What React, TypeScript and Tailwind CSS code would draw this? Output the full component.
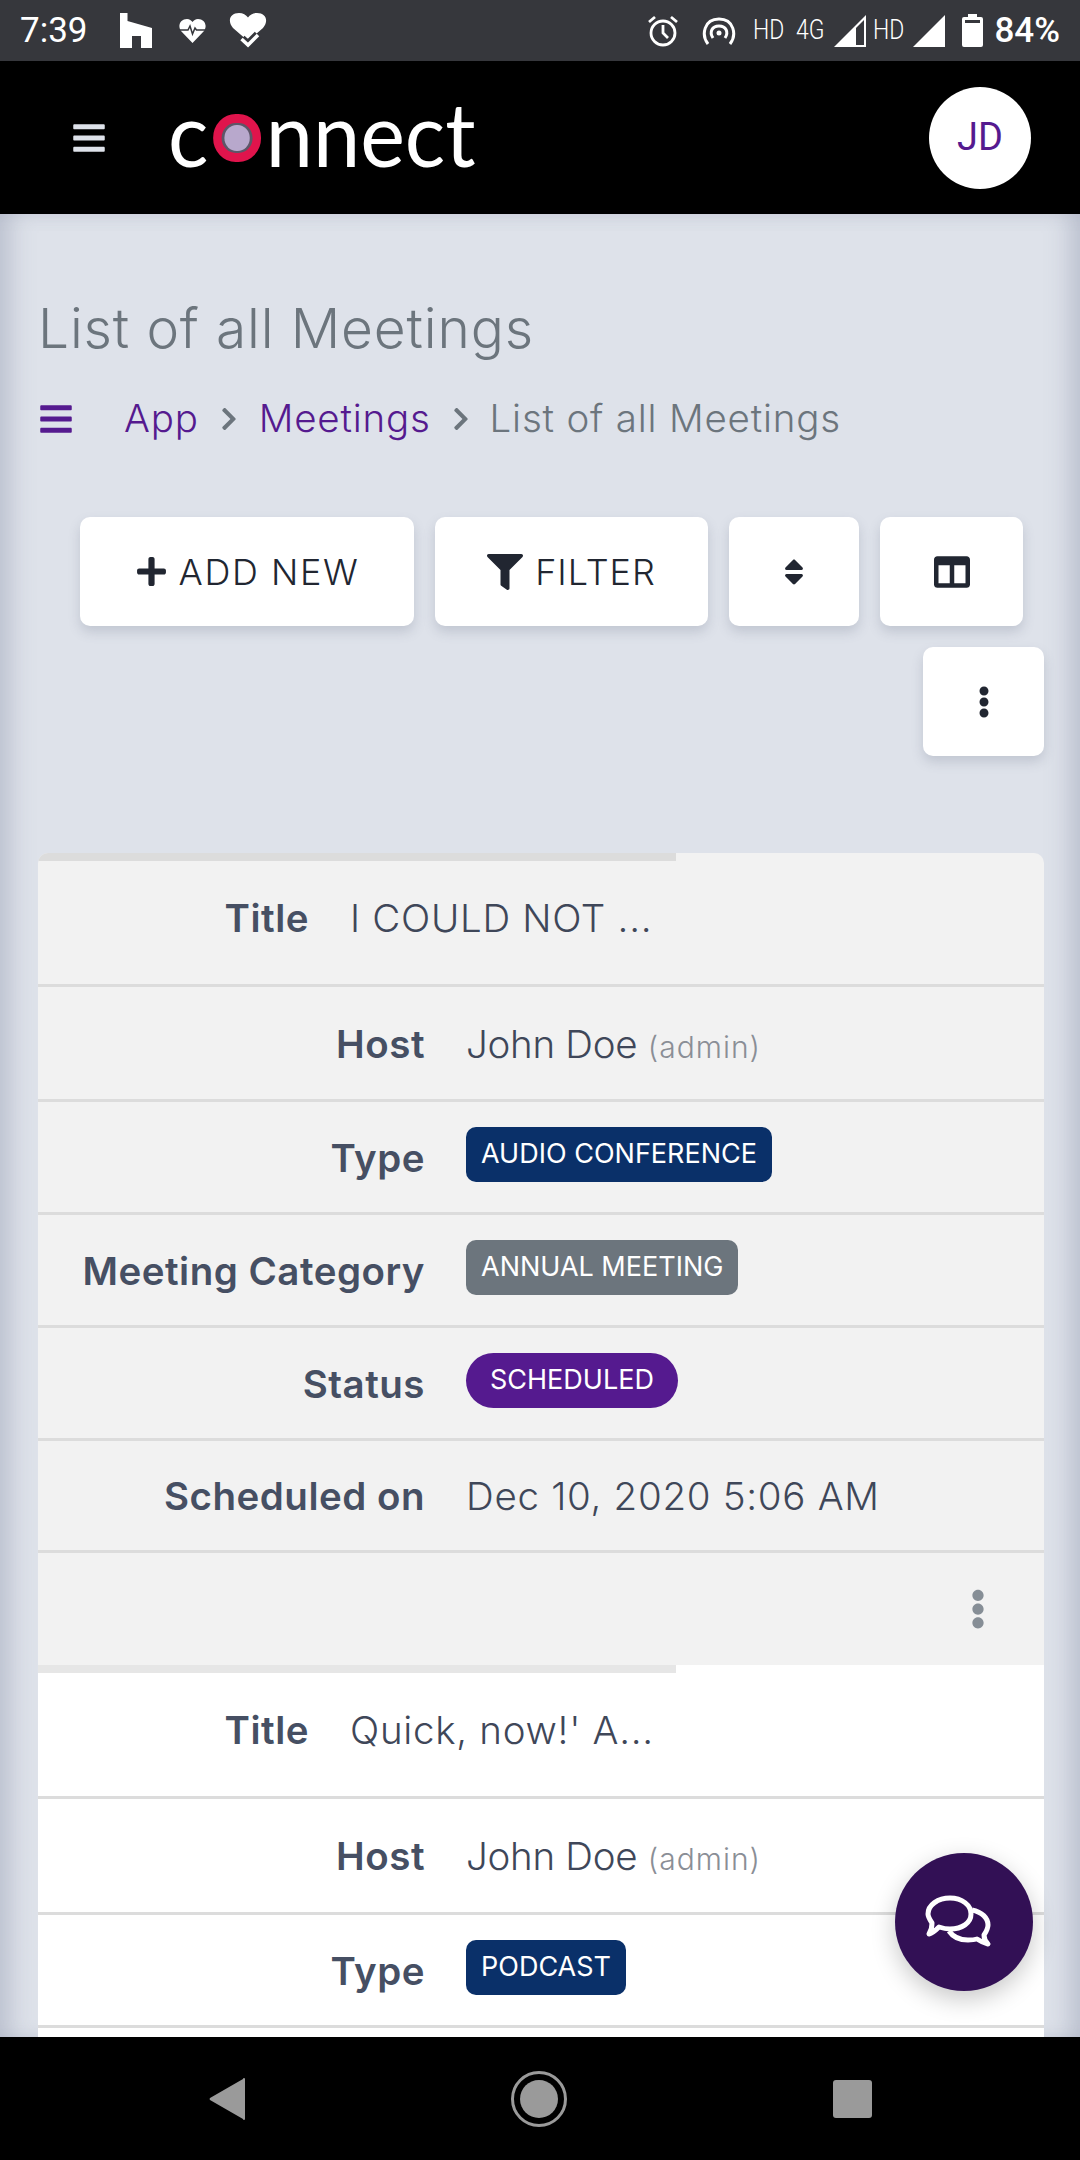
import type { ReactNode } from "react";
import { FaBars, FaChevronRight, FaColumns, FaEllipsisV, FaFilter, FaPlus, FaSort } from "react-icons/fa";

const brand = "bg-[#551a8f]";

function Badge({ children, tone }: { children: ReactNode; tone: "navy" | "gray" | "purple" }) {
  const cls =
    tone === "navy"
      ? "bg-[#0a3069] rounded-[10px] px-[15px]"
      : tone === "gray"
        ? "bg-[#6c757d] rounded-[10px] px-[15px]"
        : `${brand} rounded-full px-[24px]`;
  return (
    <span className={`${cls} inline-flex h-[55px] items-center text-[27px] font-normal tracking-normal text-white -translate-y-[7px]`}>
      {children}
    </span>
  );
}

function Row({ label, children, narrow, h }: { label: string; children?: ReactNode; narrow?: boolean; h: string }) {
  return (
    <div className={`${h} ${narrow ? "pb-[8px]" : "pt-[3px]"} flex items-center border-b-[3px] border-[#dcdcdc]`}>
      <div className={`${narrow ? "w-[271px]" : "w-[387px]"} shrink-0 text-right text-[38.5px] tracking-[0.5px] font-semibold text-[#464f63] whitespace-nowrap`}>
        {label}
      </div>
      <div className="ml-[41px] text-[38.5px] tracking-[0.7px] font-light text-[#3f4759] whitespace-nowrap">{children}</div>
    </div>
  );
}

function Host() {
  return (
    <span className="tracking-[-0.3px]">
      John Doe <span className="text-[30px] tracking-[1px] text-[#8a8e96]">(admin)</span>
    </span>
  );
}

function Card({ bg, bar, children }: { bg: string; bar: string; children: ReactNode }) {
  return (
    <div className={bg}>
      <div className={`${bar} h-[8px] w-[638px]`} />
      {children}
    </div>
  );
}

function ToolButton({ children, w, last }: { children: ReactNode; w: string; last?: boolean }) {
  return (
    <button className={`${w} ${last ? "" : "mr-[21px]"} mb-[21px] h-[109px] rounded-[10px] bg-white shadow-[0_6px_12px_rgba(90,100,125,0.22)] flex items-center justify-center text-[36px] font-light text-[#212631] tracking-[1px]`}>
      {children}
    </button>
  );
}

function StatusBar() {
  return (
    <div className="h-[61px] shrink-0 bg-[#36373c] flex items-center text-white font-['Roboto',sans-serif]">
      <span className="ml-[20px] w-[69px] text-[35px] leading-none">7:39</span>
      {/* houzz */}
      <svg className="ml-[31px]" width="32" height="35" viewBox="0 0 32 35" fill="#fff"><path d="M0 0h7.500v8L32 15v20H21V23h-9v12H0z" /></svg>
      <svg className="ml-[27px]" width="27" height="24" viewBox="0 0 27 24">
        <path d="M13.500 24 2 12C-2 6 2 0 8 0c2.500 0 4.500 1.500 5.500 3 1-1.500 3-3 5.500-3 6 0 10 6 6 12Z" fill="#fff" />
        <path d="M0 11h9l2-4 2.500 8 2.500-6 1.500 2H27" fill="none" stroke="#36373c" strokeWidth="1.500" />
      </svg>
      <svg className="ml-[23px]" width="38" height="35" viewBox="0 0 38 35">
        <path d="M19 28 4 15C-2 8 1 0 10 0c4 0 7 2 9 4.500C21 2 24 0 28 0c9 0 12 8 6 15Z" fill="#fff" />
        <path d="M12.500 26l6.500 6 10-10" fill="none" stroke="#36373c" strokeWidth="9" />
        <path d="M12.500 26l6.500 6 10-10" fill="none" stroke="#fff" strokeWidth="3.500" />
      </svg>
      <div className="flex-1" />
      <svg width="32" height="32" viewBox="0 0 32 32" fill="none" stroke="#fff" strokeWidth="2.800">
        <circle cx="16" cy="18" r="12" />
        <path d="M16 10v8l5 5M2 7l6-5M30 7l-6-5" />
      </svg>
      <svg className="ml-[23px]" width="34" height="28" viewBox="0 0 34 28" fill="none" stroke="#fff" strokeWidth="3">
        <path d="M6 27C-1 18 2 2 17 2s18 16 11 25" />
        <path d="M11 21c-4-6-1-12 6-12s10 6 6 12" />
        <circle cx="17" cy="16" r="2.500" fill="#fff" stroke="none" />
      </svg>
      <span className="ml-[17px] text-[27px] leading-none font-light scale-x-[0.85] origin-left w-[43px]">HD</span>
      <span className="text-[27px] leading-none font-light scale-x-[0.85] origin-left w-[38px]">4G</span>
      <svg width="32" height="32" viewBox="0 0 32 32"><path d="M0 32 32 0v32Z" fill="#fff" /><path d="M22 13v17h8V5Z" fill="#36373c" /></svg>
      <span className="ml-[7px] text-[27px] leading-none font-light scale-x-[0.85] origin-left w-[40px]">HD</span>
      <svg width="32" height="32" viewBox="0 0 32 32" fill="#fff"><path d="M0 32 32 0v32Z" /></svg>
      <svg className="ml-[17px]" width="21" height="33" viewBox="0 0 21 33" fill="#fff"><path d="M6 0h9v3h4a2 2 0 0 1 2 2v26a2 2 0 0 1-2 2H2a2 2 0 0 1-2-2V5a2 2 0 0 1 2-2h4Z" /><rect x="3" y="6" width="15" height="3" fill="#36373c" /></svg>
      <span className="ml-[11px] mr-[20px] text-[35px] leading-none font-medium">84%</span>
    </div>
  );
}

function Header() {
  return (
    <div className="h-[153px] shrink-0 bg-black flex items-center">
      <FaBars className="ml-[71px]" size={36} color="#dee2ea" />
      <div className="ml-[61px] w-[304px] flex items-center text-[90px] leading-none text-white font-['Lato',sans-serif] font-normal scale-x-[0.94] origin-left -translate-y-[6px] whitespace-nowrap">
        <span>c</span>
        <span className="mx-[5px] mt-[12px] h-[48px] w-[51px] shrink-0 rounded-full border-[9px] border-[#e0144c] bg-[#5d5668] flex items-center justify-center">
          <span className="h-[26px] w-[27px] rounded-full bg-[#b8a8cc]" />
        </span>
        <span>nnect</span>
      </div>
      <div className="flex-1" />
      <div className="mr-[49px] h-[102px] w-[102px] rounded-full bg-white flex items-center justify-center text-[38px] text-[#551a8f] font-['Roboto',sans-serif]">JD</div>
    </div>
  );
}

function NavBar() {
  return (
    <div className="h-[123px] shrink-0 bg-black flex items-center justify-center">
      <svg width="36" height="42" viewBox="0 0 36 42"><path d="M36 1v40a1 1 0 0 1-2 0L1 22a1.500 1.500 0 0 1 0-2L34 1a1 1 0 0 1 2 0Z" fill="#9a9a9a" /></svg>
      <div className="mx-[266px] h-[56px] w-[56px] rounded-full border-[3px] border-[#9a9a9a] flex items-center justify-center">
        <span className="h-[38px] w-[38px] rounded-full bg-[#9a9a9a]" />
      </div>
      <span className="h-[38px] w-[39px] rounded-[3px] bg-[#9a9a9a]" />
    </div>
  );
}

export default function App() {
  return (
    <div className="relative h-[2160px] w-[1080px] overflow-hidden flex flex-col font-['Inter',sans-serif]">
      <StatusBar />
      <Header />
      <div className="flex-1 overflow-hidden bg-[#dee2ea] pl-[38px] pr-[36px] pt-[81px] shadow-[inset_20px_0_24px_-10px_rgba(120,130,155,0.35),inset_-20px_0_24px_-10px_rgba(120,130,155,0.35)]">
        <h1 className="text-[55px] leading-[66px] font-light text-[#6c757d] tracking-[0.85px]">List of all Meetings</h1>
        <nav className="mt-[35px] h-[46px] flex items-center text-[38.5px] font-light whitespace-nowrap tracking-[0.8px]">
          <FaBars size={36} color="#551a8f" />
          <span className="ml-[50px] text-[#551a8f]">App</span>
          <FaChevronRight className="ml-[17px]" size={26} color="#6c757d" />
          <span className="ml-[17px] text-[#551a8f]">Meetings</span>
          <FaChevronRight className="ml-[17px]" size={26} color="#6c757d" />
          <span className="ml-[16px] text-[#6c757d]">List of all Meetings</span>
        </nav>
        <div className="mt-[75px] flex flex-wrap justify-end">
          <ToolButton w="w-[334px]"><FaPlus size={33} className="mr-[11px]" /><span className="tracking-[1.6px]">ADD NEW</span></ToolButton>
          <ToolButton w="w-[273px]"><FaFilter size={36} className="mr-[12px]" />FILTER</ToolButton>
          <ToolButton w="w-[130px]"><FaSort size={32} /></ToolButton>
          <ToolButton w="w-[143px]"><FaColumns size={36} /></ToolButton>
          <ToolButton w="w-[121px]" last><FaEllipsisV size={32} /></ToolButton>
        </div>
        <div className="mt-[76px] overflow-hidden rounded-t-[10px]">
          <Card bg="bg-[#f2f2f2]" bar="bg-[#dcdcdc]">
            <Row narrow label="Title" h="h-[126px]">I COULD NOT ...</Row>
            <Row label="Host" h="h-[115px]"><Host /></Row>
            <Row label="Type" h="h-[113px]"><Badge tone="navy">AUDIO CONFERENCE</Badge></Row>
            <Row label="Meeting Category" h="h-[113px]"><Badge tone="gray">ANNUAL MEETING</Badge></Row>
            <Row label="Status" h="h-[113px]"><Badge tone="purple">SCHEDULED</Badge></Row>
            <Row label="Scheduled on" h="h-[112px]">Dec 10, 2020 5:06 AM</Row>
            <div className="h-[112px] flex items-center justify-end pr-[46px]">
              <FaEllipsisV size={40} color="#868e96" />
            </div>
          </Card>
          <Card bg="bg-white" bar="bg-[#e6e6e6]">
            <Row narrow label="Title" h="h-[126px]">Quick, now!' A...</Row>
            <Row label="Host" h="h-[116px]"><Host /></Row>
            <Row label="Type" h="h-[113px]"><Badge tone="navy">PODCAST</Badge></Row>
            <div className="h-[40px]" />
          </Card>
        </div>
      </div>
      <NavBar />
      <div className="absolute left-[895px] top-[1853px] h-[138px] w-[138px] rounded-full bg-[#321055] shadow-[0_8px_24px_rgba(0,0,0,0.22)] flex items-center justify-center">
        <svg className="-translate-x-[4px]" width="90" height="75" viewBox="0 0 90 75" fill="none" stroke="#fff" strokeWidth="5" strokeLinejoin="round">
          <path d="M35 13c12 0 21 7 21 16s-9 15-21 15c-4 0-8-1-11-2-3 3-6 6-10 7 2-3 3-7 3-11-2-3-4-6-4-9 0-9 10-16 22-16Z" />
          <path d="M57 25c10 2 16 8 16 15 0 4-2 7-4 10 0 3 2 7 4 9-4-1-8-3-11-5-3 1-6 1-9 1-8 0-15-3-19-9" />
        </svg>
      </div>
    </div>
  );
}
